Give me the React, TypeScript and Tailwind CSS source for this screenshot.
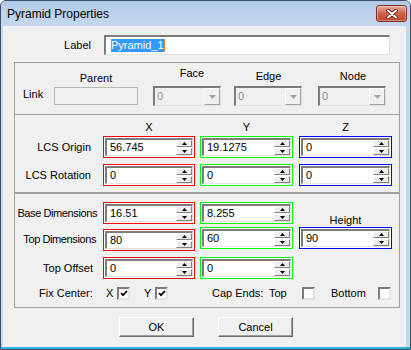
import React from "react";

type Tint = "red" | "green" | "blue";

const tintBorder: Record<Tint, string> = {
  red: "border-[#ff0000]",
  green: "border-[#00ff00]",
  blue: "border-[#0000ff]",
};

const sunken =
  "border-t-2 border-l-2 border-r border-b border-t-[#7c7c7c] border-l-[#7c7c7c] border-r-[#e3e3e3] border-b-[#e3e3e3]";

const Arrow = ({ up, color = "#000" }: { up?: boolean; color?: string }) => (
  <svg width="5" height="3" viewBox="0 0 5 3">
    <path d={up ? "M2.5 0 L5 3 L0 3Z" : "M0 0 L5 0 L2.5 3Z"} fill={color} />
  </svg>
);

const SpinBox = ({ value, tint, w }: { value: string; tint: Tint; w: string }) => (
  <div className={`${w} h-[22px] border ${tintBorder[tint]} p-px bg-white`}>
    <div className={`h-full ${sunken} bg-white flex items-center pl-[3px]`}>
      <span className="flex-1 text-[11px] leading-[13px]">{value}</span>
      <div className="w-[16px] h-full flex flex-col gap-px">
        <div className="flex-1 bg-[#ececec] border border-t-white border-l-white border-r-[#808080] border-b-[#808080] flex items-center justify-center">
          <Arrow up />
        </div>
        <div className="flex-1 bg-[#ececec] border border-t-white border-l-white border-r-[#808080] border-b-[#808080] flex items-center justify-center">
          <Arrow />
        </div>
      </div>
    </div>
  </div>
);

const Combo = () => (
  <div className={`w-[68px] h-[20px] ${sunken} bg-[#f0f0f0] flex items-center pl-[2px]`}>
    <span className="flex-1 text-[11px] leading-[13px] text-[#8a8a9a]">0</span>
    <div className="w-[16px] h-full bg-[#f0f0f0] border border-t-white border-l-white border-r-[#a0a0a0] border-b-[#a0a0a0] flex items-center justify-center">
      <svg width="7" height="4" viewBox="0 0 7 4">
        <path d="M0 0 L7 0 L3.5 4Z" fill="#a0a0a0" />
      </svg>
    </div>
  </div>
);

const CheckBox = ({ checked }: { checked?: boolean }) => (
  <div className="w-[13px] h-[13px] bg-white border-2 border-t-[#7a7a7a] border-l-[#7a7a7a] border-r-[#e3e3e3] border-b-[#e3e3e3] flex items-center justify-center">
    {checked && (
      <svg width="8" height="7" viewBox="0 0 8 7">
        <polyline points="1,3 3,5.2 7,1" fill="none" stroke="#000" strokeWidth="1.8" />
      </svg>
    )}
  </div>
);

const Button = ({ children, ml }: { children: React.ReactNode; ml: string }) => (
  <div
    className={`${ml} w-[75px] h-[20px] bg-[#f0f0f0] border border-t-white border-l-white border-r-[#696969] border-b-[#696969] shadow-[inset_-1px_-1px_0_#a0a0a0] flex items-center justify-center text-[11px]`}
  >
    {children}
  </div>
);

const group = "ml-[11px] w-[386px] border border-[#a0a0a0] flex flex-col";

export default function App() {
  return (
    <div className="w-[411px] h-[350px] bg-white font-['Liberation_Sans',Arial,sans-serif] text-black">
      <div className="w-[411px] h-[350px] rounded-t-[6px] border border-[#3a4f68] bg-[#c3d7ed] flex flex-col overflow-hidden">
        {/* Title bar */}
        <div className="h-[25px] flex items-center justify-between pl-[6px] pr-[3px] bg-gradient-to-b from-[#b3cbe7] to-[#c5d8ee]">
          <span className="text-[12px]">Pyramid Properties</span>
          <div className="w-[31px] h-[17px] rounded-[3px] border border-[#7b3026] bg-gradient-to-b from-[#e6ad9f] via-[#d06048] to-[#c5452f] shadow-[inset_0_0_0_1px_rgba(255,255,255,0.35)] flex items-center justify-center">
            <svg width="12" height="10" viewBox="0 0 12 10">
              <path d="M2 1.5 L10 8.5 M10 1.5 L2 8.5" stroke="#5a1a12" strokeWidth="3.6" strokeLinecap="round" />
              <path d="M2 1.5 L10 8.5 M10 1.5 L2 8.5" stroke="#ffffff" strokeWidth="2" strokeLinecap="round" />
            </svg>
          </div>
        </div>

        {/* Client area */}
        <div className="ml-[2px] mr-[4px] h-[321px] bg-[#f0f0f0] flex flex-col text-[11px] leading-[13px]">
          {/* Label */}
          <div className="mt-[9px] h-[20px] flex items-center">
            <span className="w-[88px] text-right">Label</span>
            <div className={`ml-[13px] w-[286px] h-[20px] ${sunken} bg-white flex items-center pl-[5px]`}>
              <span className="bg-[#3399ff] text-white leading-[13px]">Pyramid_1</span>
              <span className="w-px h-[13px] bg-[#e07a1f]" />
            </div>
          </div>

          {/* Link */}
          <div className={`${group} mt-[7px] h-[53px]`}>
            <div className="flex items-start">
              <span className="ml-[8px] w-[31px] mt-[25px]">Link</span>
              <div className="w-[84px] flex flex-col">
                <span className="mt-[9px] text-center">Parent</span>
                <div className="mt-[2px] h-[18px] border border-[#b9b9b9] bg-[#f0f0f0]" />
              </div>
              <div className="ml-[15px] w-[68px] flex flex-col">
                <span className="mt-[4px] text-center pl-[10px]">Face</span>
                <div className="mt-[6px]">
                  <Combo />
                </div>
              </div>
              <div className="ml-[13px] w-[69px] flex flex-col">
                <span className="mt-[7px] text-center">Edge</span>
                <div className="mt-[3px]">
                  <Combo />
                </div>
              </div>
              <div className="ml-[15px] w-[70px] flex flex-col">
                <span className="mt-[7px] text-center">Node</span>
                <div className="mt-[3px]">
                  <Combo />
                </div>
              </div>
            </div>
          </div>

          {/* LCS */}
          <div className={`${group} -mt-px h-[79px]`}>
            <div className="mt-[6px] h-[13px] flex">
              <span className="w-[88px]" />
              <span className="w-[92px] text-center">X</span>
              <span className="ml-[5px] w-[93px] text-center">Y</span>
              <span className="ml-[6px] w-[93px] text-center">Z</span>
            </div>
            <div className="mt-[2px] h-[22px] flex items-center">
              <span className="w-[88px] text-right pr-[12px]">LCS Origin</span>
              <SpinBox value="56.745" tint="red" w="w-[92px]" />
              <div className="ml-[5px]">
                <SpinBox value="19.1275" tint="green" w="w-[93px]" />
              </div>
              <div className="ml-[6px]">
                <SpinBox value="0" tint="blue" w="w-[93px]" />
              </div>
            </div>
            <div className="mt-[6px] h-[22px] flex items-center">
              <span className="w-[88px] text-right pr-[12px]">LCS Rotation</span>
              <SpinBox value="0" tint="red" w="w-[92px]" />
              <div className="ml-[5px]">
                <SpinBox value="0" tint="green" w="w-[93px]" />
              </div>
              <div className="ml-[6px]">
                <SpinBox value="0" tint="blue" w="w-[93px]" />
              </div>
            </div>
          </div>

          {/* Dimensions */}
          <div className={`${group} h-[115px]`}>
            <div className="mt-[8px] h-[22px] flex items-start">
              <span className="w-[88px] h-[22px] flex items-center justify-end pr-[6px] tracking-[-0.4px] whitespace-nowrap">
                Base Dimensions
              </span>
              <SpinBox value="16.51" tint="red" w="w-[92px]" />
              <div className="ml-[5px]">
                <SpinBox value="8.255" tint="green" w="w-[93px]" />
              </div>
              <span className="ml-[6px] w-[93px] mt-[12px] text-center">Height</span>
            </div>
            <div className="mt-[3px] h-[24px] flex items-start">
              <span className="w-[88px] h-[24px] flex items-center justify-end pr-[7px] tracking-[-0.4px] whitespace-nowrap">
                Top Dimensions
              </span>
              <div className="mt-[2px]">
                <SpinBox value="80" tint="red" w="w-[92px]" />
              </div>
              <div className="ml-[5px]">
                <SpinBox value="60" tint="green" w="w-[93px]" />
              </div>
              <div className="ml-[6px]">
                <SpinBox value="90" tint="blue" w="w-[93px]" />
              </div>
            </div>
            <div className="mt-[6px] h-[22px] flex items-center">
              <span className="w-[88px] text-right pr-[10px]">Top Offset</span>
              <SpinBox value="0" tint="red" w="w-[92px]" />
              <div className="ml-[5px]">
                <SpinBox value="0" tint="green" w="w-[93px]" />
              </div>
            </div>
            <div className="mt-[8px] h-[13px] flex items-center">
              <span className="ml-[24px] w-[67px]">Fix Center:</span>
              <span className="w-[11px]">X</span>
              <CheckBox checked />
              <span className="ml-[14px] w-[11px]">Y</span>
              <CheckBox checked />
              <span className="ml-[44px] w-[57px]">Cap Ends:</span>
              <span className="w-[33px]">Top</span>
              <CheckBox />
              <span className="ml-[16px] w-[47px]">Bottom</span>
              <CheckBox />
            </div>
          </div>

          {/* Buttons */}
          <div className="mt-[9px] flex">
            <Button ml="ml-[116px]">OK</Button>
            <Button ml="ml-[24px]">Cancel</Button>
          </div>
        </div>
        <div className="h-[2px] bg-[#2fb4de]" />
      </div>
    </div>
  );
}
